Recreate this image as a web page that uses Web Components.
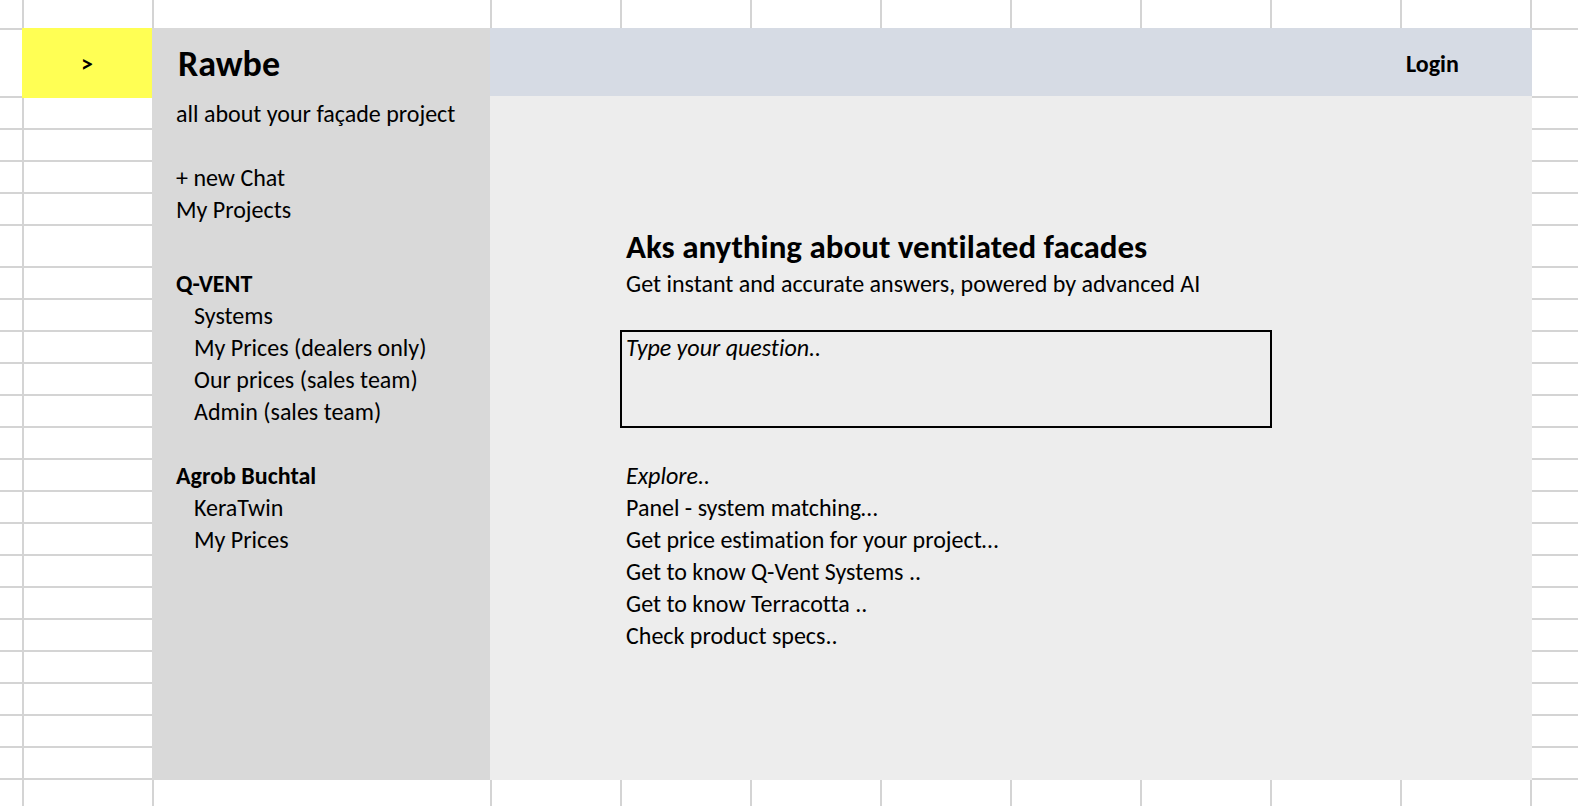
<!DOCTYPE html>
<html lang="en">
<head>
<meta charset="utf-8">
<title>Rawbe</title>
<style>
  body { margin: 0; background: #fff; color: #000; font: 24px/28px Carlito, Calibri, Lato, sans-serif; font-variant-ligatures: none; }
</style>
</head>
<body>
<spread-sheet>
  <marker-cell slot="marker">&gt;</marker-cell>
  <side-bar slot="sidebar">
    <nav-group>
      <nav-item action>+ new Chat</nav-item>
      <nav-item>My Projects</nav-item>
    </nav-group>
    <nav-group heading="Q-VENT" spaced>
      <nav-item>Systems</nav-item>
      <nav-item>My Prices (dealers only)</nav-item>
      <nav-item>Our prices (sales team)</nav-item>
      <nav-item>Admin (sales team)</nav-item>
    </nav-group>
    <nav-group heading="Agrob Buchtal">
      <nav-item>KeraTwin</nav-item>
      <nav-item>My Prices</nav-item>
    </nav-group>
  </side-bar>
  <top-bar slot="topbar">Login</top-bar>
  <ask-panel slot="main">
    <span slot="title">Aks anything about ventilated facades</span>
    <span slot="subtitle">Get instant and accurate answers, powered by advanced AI</span>
    <nav-item>Panel - system matching…</nav-item>
    <nav-item>Get price estimation for your project…</nav-item>
    <nav-item>Get to know Q-Vent Systems ..</nav-item>
    <nav-item>Get to know Terracotta ..</nav-item>
    <nav-item>Check product specs..</nav-item>
  </ask-panel>
</spread-sheet>

<script>
const define = (name, html, setup) => {
  const template = document.createElement('template');
  template.innerHTML = html;
  customElements.define(name, class extends HTMLElement {
    connectedCallback() {
      if (this.shadowRoot) return;
      const root = this.attachShadow({ mode: 'open' });
      root.append(template.content.cloneNode(true));
      if (setup) setup(this, root);
    }
  });
};

// Grid of ruled cells; the application mock-up covers the middle of it.
define('spread-sheet', `
  <style>
    :host {
      display: grid;
      min-height: 100vh;
      overflow: hidden;
      grid-template-columns: 22px 130px 338px repeat(8, minmax(0, 1fr)) 48px;
      grid-template-rows: 28px 68px repeat(4, 32px) 42px repeat(16, 32px) minmax(28px, 1fr);
    }
    .col { grid-row: 1 / -1; border-left: 2px solid #d4d4d4; }
    .row { grid-column: 1 / -1; border-top: 2px solid #d4d4d4; }
    .marker { grid-area: 2 / 2 / 3 / 3; margin-bottom: -2px; }
    .app {
      grid-area: 2 / 3 / 24 / 12;
      margin: 0 -2px -2px 0;
      display: grid;
      grid-template-columns: 338px minmax(0, 1fr);
      grid-template-rows: 68px 1fr;
    }
    .side { grid-row: 1 / 3; }
    .side, .marker, .top, .main { display: grid; }
  </style>
  <div class="marker"><slot name="marker"></slot></div>
  <div class="app">
    <div class="side"><slot name="sidebar"></slot></div>
    <div class="top"><slot name="topbar"></slot></div>
    <div class="main"><slot name="main"></slot></div>
  </div>`, (host, root) => {
  const first = root.querySelector('.marker');
  const rule = (kind, area) => {
    const line = document.createElement('div');
    line.className = kind;
    line.style[kind === 'col' ? 'gridColumn' : 'gridRow'] = area;
    first.before(line);
  };
  for (let c = 2; c <= 12; c++) rule('col', c);
  for (let r = 2; r <= 24; r++) rule('row', r);
});

define('marker-cell', `
  <style>
    :host { display: grid; }
    button { border: 0; margin: 0; padding: 2px 0 0; background: #ffff54; color: inherit; font: inherit; font-weight: bold; }
  </style>
  <button type="button"><slot></slot></button>`);

define('side-bar', `
  <style>
    :host { display: block; background: #d9d9d9; padding-left: 24px; }
    h1 { margin: 0; padding: 4px 0 0 2px; font-size: 36px; line-height: 64px; }
    p { margin: 0 0 32px; padding-top: 4px; }
  </style>
  <h1>Rawbe</h1>
  <p>all about your façade project</p>
  <nav><slot></slot></nav>`);

define('nav-group', `
  <style>
    :host { display: block; margin-bottom: 32px; }
    :host([spaced]) { margin-top: 42px; }
    h2 { margin: 0; padding-top: 4px; font-size: 24px; line-height: 28px; }
    h2 + div { padding-left: 18px; }
  </style>
  <div><slot></slot></div>`, (host, root) => {
  const text = host.getAttribute('heading');
  if (!text) return;
  const h = document.createElement('h2');
  h.textContent = text;
  root.querySelector('div').before(h);
});

define('nav-item', `
  <style>
    :host { display: block; padding-top: 4px; height: 28px; white-space: nowrap; }
    a, button { color: inherit; text-decoration: none; font: inherit; font-variant-ligatures: none; }
    button { display: block; border: 0; margin: 0; padding: 0; background: none; }
  </style>`, (host, root) => {
  const control = document.createElement(host.hasAttribute('action') ? 'button' : 'a');
  if (control.localName === 'a') control.href = '#';
  else control.type = 'button';
  control.append(document.createElement('slot'));
  root.append(control);
});

define('top-bar', `
  <style>
    :host { display: grid; grid-template-columns: repeat(8, minmax(0, 1fr)); padding-right: 2px; background: #d6dbe4; }
    button { grid-column: 8; border: 0; margin: 0; padding: 4px 0 0 6px; background: none; color: inherit; font: inherit; font-weight: bold; text-align: left; }
  </style>
  <button type="button"><slot></slot></button>`);

define('ask-panel', `
  <style>
    :host {
      display: grid;
      grid-template-columns: repeat(8, minmax(0, 1fr));
      align-content: start;
      padding: 128px 2px 0 0;
      background: #ededed;
    }
    header, section { grid-column: 2 / -1; padding-left: 6px; }
    h2 { margin: 0; padding-top: 4px; font-size: 33px; line-height: 38px; }
    p { margin: 0; padding-top: 4px; }
    .explore { font-style: italic; }
    textarea {
      grid-column: 2 / 7;
      box-sizing: border-box;
      width: calc(100% + 2px);
      height: 98px;
      margin: 32px 0 30px;
      padding: 2px 4px;
      border: 2px solid #000;
      border-radius: 0;
      background: none;
      font: inherit;
      font-style: italic;
      font-variant-ligatures: none;
      color: inherit;
      resize: none;
      outline: none;
    }
    textarea::placeholder { color: #000; opacity: 1; }
  </style>
  <header>
    <h2><slot name="title"></slot></h2>
    <p><slot name="subtitle"></slot></p>
  </header>
  <textarea aria-label="Type your question" placeholder="Type your question.."></textarea>
  <section>
    <p class="explore">Explore..</p>
    <slot></slot>
  </section>`);
</script>
</body>
</html>
